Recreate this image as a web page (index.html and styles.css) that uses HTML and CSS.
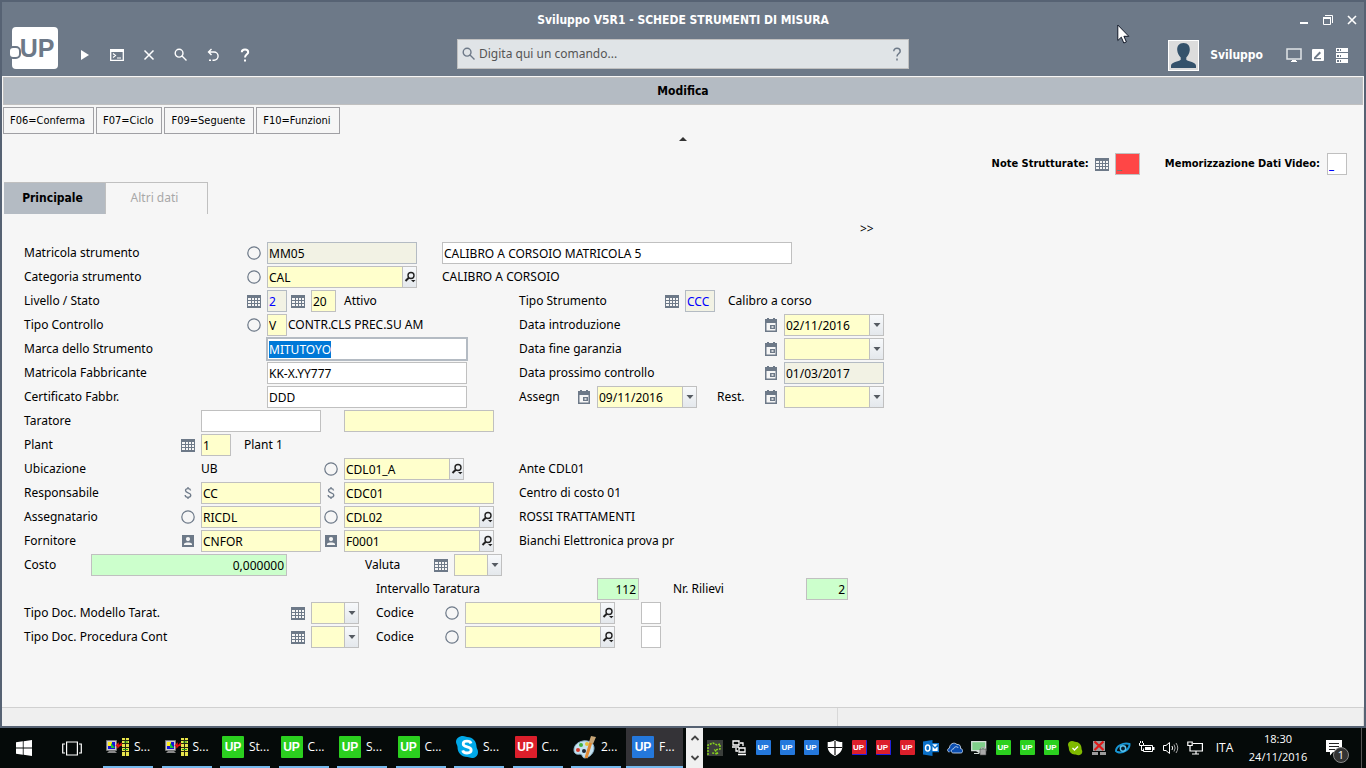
FILE: index.html
```html
<!DOCTYPE html>
<html lang="it">
<head>
<meta charset="utf-8">
<title>Sviluppo V5R1 - SCHEDE STRUMENTI DI MISURA</title>
<link rel="stylesheet" href="styles.css">
</head>
<body>
<svg class="defs" aria-hidden="true">
  <symbol id="i-grid" viewBox="0 0 14 14"><rect width="14" height="13" y="1" fill="#6d7988"/><path fill="#f6f6f6" d="M1 4h3v2H1zM5 4h2v2H5zM8 4h2v2H8zM11 4h2v2h-2zM1 7h3v2H1zM5 7h2v2H5zM8 7h2v2H8zM11 7h2v2h-2zM1 10h3v2H1zM5 10h2v2H5zM8 10h2v2H8zM11 10h2v2h-2z"/></symbol>
  <symbol id="i-ring" viewBox="0 0 14 14"><circle cx="7" cy="7" r="6.2" fill="none" stroke="#6d7988" stroke-width="1.2"/></symbol>
  <symbol id="i-cal" viewBox="0 0 14 14"><path fill="#6d7988" fill-rule="evenodd" d="M3 0h2v1h4V0h2v1h2v13H1V1h2zM2.500 5v7.500h9V5zM6 7h5v4H6zm1.500 1.300v1.500h2V8.300z"/></symbol>
  <symbol id="i-person" viewBox="0 0 14 14"><path fill="#6d7988" fill-rule="evenodd" d="M1 1h12v12H1zM7 3a2 2 0 1 0 0 4.200A2 2 0 0 0 7 3zM3 11h8V9.800C9.500 8 4.500 8 3 9.800z"/></symbol>
  <symbol id="i-dollar" viewBox="0 0 14 14"><path fill="none" stroke="#6d7988" stroke-width="1.300" d="M9.600 4.500C9.400 3.200 8.400 2.600 7 2.600S4.500 3.300 4.500 4.600C4.500 7.500 9.800 6 9.800 9c0 1.500-1.200 2.300-2.800 2.300S4.200 10.500 4.100 9M7 1v1.600M7 11.300V13"/></symbol>
  <symbol id="i-look" viewBox="0 0 12 14"><circle cx="7" cy="5.500" r="3" fill="none" stroke="#222" stroke-width="1.400"/><path fill="none" stroke="#222" stroke-width="2" d="M4.800 7.800 1.500 11"/><path fill="#222" d="M7 10h4.500L9.300 12.200z"/></symbol>
  <symbol id="i-down" viewBox="0 0 8 4"><path fill="#555b62" d="M.5 0h7L4 4z"/></symbol>
  <symbol id="i-search" viewBox="0 0 14 14"><path fill="none" stroke="currentColor" stroke-width="1.400" d="M9 5.200a3.900 3.900 0 1 1-7.800 0 3.900 3.900 0 0 1 7.800 0M8 8l4.500 4.500"/></symbol>
  <symbol id="i-help" viewBox="0 0 14 14"><path fill="none" stroke="currentColor" stroke-width="2" d="M3.800 4.200C3.800 2.500 5.200 1.500 7 1.500s3.200 1 3.200 2.700C10.200 6.200 7 6.500 7 9.500M7 11.500v2"/></symbol>
  <symbol id="i-pc" viewBox="0 0 24 20"><path fill="#ccc" stroke="#777" d="M1.500 3.500h10v10h-10z"/><path fill="#1313d8" d="M3 5h7v7H3z"/><path fill="#ffee20" d="M3 5h4v4H3z"/><path fill="#17c437" d="m6 6 4 5H6z"/><path fill="#888" d="M4 14h6l2 2H2z"/><path stroke="#e01010" stroke-width="1.500" fill="none" d="m11 9 2-2v3l3-3v2"/><path fill="#e8e54b" d="M17 1h7v18h-7z"/><path stroke="#27270e" d="M17 3.500h7M17 6.500h7M17 10.500h7M17 14.500h7M20.500 1v18"/><path stroke="#179b21" d="M19 5h4M18 12.500h5"/></symbol>
</svg>

<div class="window">
  <header class="header">
    <div class="left">
      <button class="logo" aria-label="Menu UP"><span>UP</span></button>
      <nav class="tools">
        <button aria-label="Esegui"><svg width="14" height="14" viewBox="0 0 14 14"><path fill="#fff" d="m3 2 8 5-8 5z"/></svg></button>
        <button aria-label="Console"><svg width="14" height="14" viewBox="0 0 14 14"><path fill="none" stroke="#fff" stroke-width="1.300" d="M.7 1.700h12.600v10.600H.7z"/><path fill="#fff" d="M0 1h14v3H0z"/><path fill="none" stroke="#fff" stroke-width="1.200" d="m3 5.500 2.500 2L3 9.500M7 10h4"/></svg></button>
        <button aria-label="Annulla"><svg width="14" height="14" viewBox="0 0 14 14"><path stroke="#fff" stroke-width="1.500" d="m2.500 2.500 9 9m0-9-9 9"/></svg></button>
        <button aria-label="Cerca"><svg width="14" height="14"><use href="#i-search"/></svg></button>
        <button aria-label="Indietro"><svg width="14" height="14" viewBox="0 0 14 14"><path fill="none" stroke="#fff" stroke-width="1.400" d="M5.500 1 2.500 4l3 3M2.500 4H8a4 4 0 0 1 0 8.200H6.500"/><path fill="#fff" d="M3 11.500h2v1.500H3z"/></svg></button>
        <button aria-label="Aiuto"><svg width="14" height="14"><use href="#i-help"/></svg></button>
      </nav>
    </div>
    <h1 class="title">Sviluppo V5R1 - SCHEDE STRUMENTI DI MISURA</h1>
    <div class="controls">
      <button aria-label="Riduci"><svg width="12" height="12" viewBox="0 0 12 12"><path fill="#fff" d="M2 8h8v2H2z"/></svg></button>
      <button aria-label="Ripristina"><svg width="12" height="12" viewBox="0 0 12 12"><path fill="none" stroke="#fff" d="M3 1.500h7.500V9M1.500 4v6.500h7V4"/><path stroke="#fff" stroke-width="2" d="M1 4h8"/></svg></button>
      <button aria-label="Chiudi"><svg width="12" height="12" viewBox="0 0 12 12"><path stroke="#fff" stroke-width="1.600" d="m2 2 8 8m0-8-8 8"/></svg></button>
    </div>
    <form class="search">
      <svg width="14" height="14"><use href="#i-search"/></svg>
      <input type="text" aria-label="Comando" placeholder="Digita qui un comando...">
      <button type="button" aria-label="Aiuto comandi"><svg width="14" height="14" viewBox="0 0 14 14"><path fill="none" stroke="currentColor" stroke-width="1.500" d="M3.800 4.200C3.800 2.300 5.200 1.300 7 1.300s3.200 1 3.200 2.900C10.200 6.500 7 6.500 7 9.500M7 11.500v2"/></svg></button>
    </form>
    <div class="user">
      <svg class="avatar" width="31" height="31" viewBox="0 0 31 31"><path fill="#fff" d="M0 0h31v31H0z"/><path fill="#dcdcdc" d="M1 1h29v29H1z"/><path fill="#34526b" d="M15.500 3c4.500 0 6.500 3 6.300 7-.2 3-1.800 6-3.500 7.500v2.200c2 2 9.700 2.300 9.700 6V28H3v-2.300c0-3.700 7.700-4 9.700-6v-2.200C11 16 9.400 13 9.200 10 9 6 11 3 15.500 3z"/></svg>
      <span class="user-name">Sviluppo</span>
      <div class="user-tools">
        <button aria-label="Schermo"><svg width="16" height="16" viewBox="0 0 16 16"><path fill="none" stroke="#dfe3e6" stroke-width="1.500" d="M1 2h14v10H1z"/><path fill="#fff" d="M6 13h4v1H6zM5 14h6v1H5z"/></svg></button>
        <button aria-label="Modifica note"><svg width="12" height="12" viewBox="0 0 12 12"><rect width="12" height="12" rx="1" fill="#fff"/><path fill="#6d7988" d="M2 8.500 7.500 2.500 9 4 4 9h5v1.200H2z"/></svg></button>
        <button aria-label="Server"><svg width="12" height="15" viewBox="0 0 12 15"><path fill="#fff" d="M0 0h12v4H0zM0 5h12v5H0zM0 11h12v4H0z"/><path fill="#6d7988" d="M1 1h2v2H1zM4 1h1v2H4zM1 7h2v2H1zM4 7h1v2H4zM1 12h2v2H1zM4 12h1v2H4z"/></svg></button>
      </div>
    </div>
  </header>

  <main class="main">
    <h2 class="mode">Modifica</h2>
    <div class="commands">
      <button>F06=Conferma</button><button>F07=Ciclo</button><button>F09=Seguente</button><button>F10=Funzioni</button>
    </div>
    <button class="collapse" aria-label="Comprimi"><svg width="8" height="4" viewBox="0 0 8 4"><path fill="#333" d="M4 0 8 4H0z"/></svg></button>
    <div class="options">
      <label for="note">Note Strutturate:</label>
      <button class="ico" aria-label="Elenco note"><svg><use href="#i-grid"/></svg></button>
      <input id="note" class="alert w25" value="_">
      <label class="memo-label" for="memo">Memorizzazione Dati Video:</label>
      <input id="memo" class="code w20" value="_">
    </div>
    <div class="tabs" role="tablist">
      <button role="tab" aria-selected="true">Principale</button><button role="tab" aria-selected="false">Altri dati</button>
    </div>

    <form class="form">
      <div class="row"><a class="x-more" href="#">&gt;&gt;</a></div>
      <div class="row">
        <label class="x-label" for="matr">Matricola strumento</label>
        <button type="button" class="ico x-ico3"><svg><use href="#i-ring"/></svg></button>
        <input id="matr" class="x-f3 w150 ro" value="MM05" readonly>
        <input class="x-desc2 w350" aria-label="Descrizione" value="CALIBRO A CORSOIO MATRICOLA 5">
      </div>
      <div class="row">
        <label class="x-label" for="cat">Categoria strumento</label>
        <button type="button" class="ico x-ico3"><svg><use href="#i-ring"/></svg></button>
        <span class="combo x-f3 w150"><input id="cat" value="CAL"><button type="button" aria-label="Cerca"><svg class="look"><use href="#i-look"/></svg></button></span>
        <span class="x-desc2">CALIBRO A CORSOIO</span>
      </div>
      <div class="row">
        <label class="x-label" for="liv">Livello / Stato</label>
        <button type="button" class="ico x-ico3"><svg><use href="#i-grid"/></svg></button>
        <input id="liv" class="x-f3 w20 ro code" value="2" readonly>
        <button type="button" class="ico x-ico4"><svg><use href="#i-grid"/></svg></button>
        <input class="x-f4 w25 y" aria-label="Stato" value="20">
        <span class="x-f5">Attivo</span>
        <label class="x-right" for="tipo">Tipo Strumento</label>
        <button type="button" class="ico x-ico8"><svg><use href="#i-grid"/></svg></button>
        <input id="tipo" class="x-f8 w30 ro code" value="CCC" readonly>
        <span class="x-desc8">Calibro a corso</span>
      </div>
      <div class="row">
        <label class="x-label" for="ctrl">Tipo Controllo</label>
        <button type="button" class="ico x-ico3"><svg><use href="#i-ring"/></svg></button>
        <input id="ctrl" class="x-f3 w20 y" value="V">
        <span class="x-desc3">CONTR.CLS PREC.SU AM</span>
        <label class="x-right" for="dintro">Data introduzione</label>
        <button type="button" class="ico x-ico9"><svg><use href="#i-cal"/></svg></button>
        <span class="combo x-f9 w100"><input id="dintro" value="02/11/2016"><button type="button" aria-label="Apri"><svg class="down"><use href="#i-down"/></svg></button></span>
      </div>
      <div class="row">
        <label class="x-label" for="marca">Marca dello Strumento</label>
        <input id="marca" class="x-f3 w200 active" value="MITUTOYO">
        <label class="x-right" for="dgar">Data fine garanzia</label>
        <button type="button" class="ico x-ico9"><svg><use href="#i-cal"/></svg></button>
        <span class="combo x-f9 w100"><input id="dgar"><button type="button" aria-label="Apri"><svg class="down"><use href="#i-down"/></svg></button></span>
      </div>
      <div class="row">
        <label class="x-label" for="fabb">Matricola Fabbricante</label>
        <input id="fabb" class="x-f3 w200" value="KK-X.YY777">
        <label class="x-right" for="dpross">Data prossimo controllo</label>
        <button type="button" class="ico x-ico9"><svg><use href="#i-cal"/></svg></button>
        <input id="dpross" class="x-f9 w100 ro" value="01/03/2017" readonly>
      </div>
      <div class="row">
        <label class="x-label" for="cert">Certificato Fabbr.</label>
        <input id="cert" class="x-f3 w200" value="DDD">
        <label class="x-right" for="dass">Assegn</label>
        <button type="button" class="ico x-ico7"><svg><use href="#i-cal"/></svg></button>
        <span class="combo x-f7 w100"><input id="dass" value="09/11/2016"><button type="button" aria-label="Apri"><svg class="down"><use href="#i-down"/></svg></button></span>
        <label class="x-rest" for="drest">Rest.</label>
        <button type="button" class="ico x-ico9"><svg><use href="#i-cal"/></svg></button>
        <span class="combo x-f9 w100"><input id="drest"><button type="button" aria-label="Apri"><svg class="down"><use href="#i-down"/></svg></button></span>
      </div>
      <div class="row">
        <label class="x-label" for="tar">Taratore</label>
        <input id="tar" class="x-f2 w120">
        <input class="x-f5 w150 y" aria-label="Codice taratore">
      </div>
      <div class="row">
        <label class="x-label" for="plant">Plant</label>
        <button type="button" class="ico x-ico2"><svg><use href="#i-grid"/></svg></button>
        <input id="plant" class="x-f2 w30 y" value="1">
        <span class="x-plant">Plant 1</span>
      </div>
      <div class="row">
        <label class="x-label" for="ubi">Ubicazione</label>
        <span class="x-f2">UB</span>
        <button type="button" class="ico x-ico5"><svg><use href="#i-ring"/></svg></button>
        <span class="combo x-f5 w120"><input id="ubi" value="CDL01_A"><button type="button" aria-label="Cerca"><svg class="look"><use href="#i-look"/></svg></button></span>
        <span class="x-right">Ante CDL01</span>
      </div>
      <div class="row">
        <label class="x-label" for="resp">Responsabile</label>
        <button type="button" class="ico x-ico2"><svg><use href="#i-dollar"/></svg></button>
        <input id="resp" class="x-f2 w120 y" value="CC">
        <button type="button" class="ico x-ico5"><svg><use href="#i-dollar"/></svg></button>
        <input class="x-f5 w150 y" aria-label="Codice responsabile" value="CDC01">
        <span class="x-right">Centro di costo 01</span>
      </div>
      <div class="row">
        <label class="x-label" for="asse">Assegnatario</label>
        <button type="button" class="ico x-ico2"><svg><use href="#i-ring"/></svg></button>
        <input id="asse" class="x-f2 w120 y" value="RICDL">
        <button type="button" class="ico x-ico5"><svg><use href="#i-ring"/></svg></button>
        <span class="combo x-f5 w150"><input aria-label="Codice assegnatario" value="CDL02"><button type="button" aria-label="Cerca"><svg class="look"><use href="#i-look"/></svg></button></span>
        <span class="x-right">ROSSI TRATTAMENTI</span>
      </div>
      <div class="row">
        <label class="x-label" for="forn">Fornitore</label>
        <button type="button" class="ico x-ico2"><svg><use href="#i-person"/></svg></button>
        <input id="forn" class="x-f2 w120 y" value="CNFOR">
        <button type="button" class="ico x-ico5"><svg><use href="#i-person"/></svg></button>
        <span class="combo x-f5 w150"><input aria-label="Codice fornitore" value="F0001"><button type="button" aria-label="Cerca"><svg class="look"><use href="#i-look"/></svg></button></span>
        <span class="x-right">Bianchi Elettronica prova pr</span>
      </div>
      <div class="row">
        <label class="x-label" for="costo">Costo</label>
        <input id="costo" class="x-cost w196 num" value="0,000000">
        <label class="x-valuta" for="val">Valuta</label>
        <button type="button" class="ico x-icov"><svg><use href="#i-grid"/></svg></button>
        <span class="combo x-fv w48"><select id="val"><option></option></select><span class="arrow"><svg class="down"><use href="#i-down"/></svg></span></span>
      </div>
      <div class="row">
        <label class="x-mid" for="inter">Intervallo Taratura</label>
        <input id="inter" class="x-f7 w42 num" value="112">
        <label class="x-nr" for="ril">Nr. Rilievi</label>
        <input id="ril" class="x-ril w42 num" value="2">
      </div>
      <div class="row">
        <label class="x-label" for="doc1">Tipo Doc. Modello Tarat.</label>
        <button type="button" class="ico x-ico4"><svg><use href="#i-grid"/></svg></button>
        <span class="combo x-f4 w48"><select id="doc1"><option></option></select><span class="arrow"><svg class="down"><use href="#i-down"/></svg></span></span>
        <label class="x-mid" for="cod1">Codice</label>
        <button type="button" class="ico x-ico6"><svg><use href="#i-ring"/></svg></button>
        <span class="combo x-f6 w150"><input id="cod1"><button type="button" aria-label="Cerca"><svg class="look"><use href="#i-look"/></svg></button></span>
        <input class="x-flag w20" aria-label="Opzione modello">
      </div>
      <div class="row">
        <label class="x-label" for="doc2">Tipo Doc. Procedura Cont</label>
        <button type="button" class="ico x-ico4"><svg><use href="#i-grid"/></svg></button>
        <span class="combo x-f4 w48"><select id="doc2"><option></option></select><span class="arrow"><svg class="down"><use href="#i-down"/></svg></span></span>
        <label class="x-mid" for="cod2">Codice</label>
        <button type="button" class="ico x-ico6"><svg><use href="#i-ring"/></svg></button>
        <span class="combo x-f6 w150"><input id="cod2"><button type="button" aria-label="Cerca"><svg class="look"><use href="#i-look"/></svg></button></span>
        <input class="x-flag w20" aria-label="Opzione procedura">
      </div>
    </form>
  </main>
  <footer class="status"><span></span><span></span></footer>
</div>

<footer class="taskbar">
  <button class="start" aria-label="Start"><svg width="16" height="16" viewBox="0 0 16 16"><path fill="#fff" d="M0 2.300 6.800 1.300V7.500H0zM7.600 1.200 16 0v7.500H7.600zM0 8.400h6.800v6.300L0 13.700zM7.600 8.400H16V16l-8.400-1.200z"/></svg></button>
  <button class="taskview" aria-label="Visualizzazione attività"><svg width="20" height="15" viewBox="0 0 20 15"><path fill="none" stroke="#fff" stroke-width="1.200" d="M4.600 1h10.800v13H4.600zM3 3H.7v9H3M17 3h2.300v9H17"/></svg></button>
  <div class="tasks">
    <button><svg width="24" height="20"><use href="#i-pc"/></svg>S...</button>
    <button><svg width="24" height="20"><use href="#i-pc"/></svg>S...</button>
    <button><b class="up green">UP</b>St...</button>
    <button><b class="up green">UP</b>C...</button>
    <button><b class="up green">UP</b>S...</button>
    <button><b class="up green">UP</b>C...</button>
    <button><svg width="22" height="22" viewBox="0 0 22 22"><path fill="#00a8e8" d="M7 0c2 0 3 .8 4 1 6 0 9.500 4.500 9.500 9.500 0 2 1.500 3 1.500 5.500 0 4-3 6-6 6-2 0-3-.8-4.500-1C5 21 1.500 16.500 1.500 11 1.500 9 0 8 0 6c0-3.500 3-6 7-6z"/><path fill="none" stroke="#fff" stroke-width="2.800" d="M15 7.500C14.500 5.800 13 5.200 11 5.200c-2.300 0-3.800 1-3.800 2.800 0 4 8 1.800 8 6 0 2-1.800 3-4.200 3-2.200 0-3.800-.8-4.300-2.700"/></svg>S...</button>
    <button><b class="up red">UP</b>C...</button>
    <button><svg width="23" height="23" viewBox="0 0 23 23"><path fill="#c5e2f0" stroke="#8db4ca" d="M10 5c6-1 11 2 11 7s-4 9-9 10c-3 .5-2-4-5-4-4 1-6-1-6-4 0-5 4-8 9-9z"/><circle cx="5" cy="14" r="2" fill="#d63a2c"/><circle cx="8" cy="9" r="2" fill="#42b23c"/><circle cx="14" cy="8" r="2" fill="#e6c23a"/><circle cx="11" cy="15" r="2" fill="#1b2635"/><path stroke="#e08a34" stroke-width="3" d="m13 22 5-16"/><path fill="#c7a576" d="m16 6 2-6 5 1-3 7z"/></svg>2...</button>
  </div>
  <button class="current"><b class="up blue">UP</b>F...</button>
  <div class="scroller">
    <button aria-label="Su"><svg width="10" height="6" viewBox="0 0 10 6"><path fill="none" stroke="#444" stroke-width="1.800" d="m1.500 5 3.500-3.500L8.500 5"/></svg></button>
    <button aria-label="Giù"><svg width="10" height="6" viewBox="0 0 10 6"><path fill="none" stroke="#444" stroke-width="1.800" d="m1.500 1 3.500 3.500L8.500 1"/></svg></button>
  </div>
  <div class="tray">
    <span><svg width="16" height="16" viewBox="0 0 16 16"><path fill="#3b3f3b" d="M0 0h16v16H0z"/><path fill="none" stroke="#86d11e" stroke-width="1.500" stroke-dasharray="2 1" d="M1 15V5l5-2 4 2 3-1v5l-5 1 3 4-6-1"/></svg></span>
    <span><svg width="16" height="16" viewBox="0 0 16 16"><path fill="none" stroke="#fff" stroke-width="1.300" d="M2 1h6v4H2zM8 8h6v4H8zM1 7h7M7 14.500h8M9 3h3v3M5 8v3h2"/></svg></span>
    <span><b class="up blue">UP</b></span>
    <span><b class="up blue">UP</b></span>
    <span><b class="up blue">UP</b></span>
    <span><svg width="16" height="16" viewBox="0 0 16 16"><path fill="#fff" d="M8 0c2 1.500 4.500 2 7.300 2v5c0 4.500-3.500 7-7.300 9-3.800-2-7.300-4.500-7.300-9V2C3.500 2 6 1.500 8 0z"/><path stroke="#111" stroke-width="1.200" d="M8 1v14M1 7.500h14"/></svg></span>
    <span><b class="up red edge">UP</b></span>
    <span><b class="up red edge">UP</b></span>
    <span><b class="up red">UP</b></span>
    <span><svg width="16" height="16" viewBox="0 0 16 16"><path fill="#fff" d="M8 3h8v9H8z"/><path fill="none" stroke="#0a70c8" stroke-width="1.300" d="M8 3.700h7.300v8H8M9 5l3 3 3.500-3.500"/><path fill="#0a70c8" d="M0 1.500 9.500 0v16L0 14.500z"/><ellipse cx="4.700" cy="8" rx="2.200" ry="3" fill="none" stroke="#fff" stroke-width="1.500"/></svg></span>
    <span><svg width="16" height="16" viewBox="0 0 16 16"><path fill="#0b4eb0" stroke="#dce8f8" stroke-width=".8" d="M2.500 12C0 12 0 8.500 2.500 8 2.500 4 7 1.500 10 4.500c2.500-.5 4 1.500 3.500 4 3 .5 3 4.500 0 4.500H6.500c-3 0-3-4 0-4C7 6.500 10 6 11.500 8"/></svg></span>
    <span><svg width="16" height="16" viewBox="0 0 16 16"><path fill="#7fcf8a" stroke="#d5ddd8" stroke-width="1.300" d="M.7 1.700h14v9H.7z"/><path fill="#d5ddd8" d="M5 11h4v2H3v1h6z"/><path fill="#aaa" stroke="#444" stroke-width=".6" d="M9 9h6v6H9z"/><path fill="none" stroke="#aaa" d="M10.500 9V7.500h3V9"/></svg></span>
    <span><b class="up green">UP</b></span>
    <span><b class="up green">UP</b></span>
    <span><b class="up green">UP</b></span>
    <span><svg width="16" height="16" viewBox="0 0 16 16"><path fill="#7fba00" d="M5 1c1 0 2 .5 3 .7 4 0 6.500 3 6.500 6.500 0 1.500.8 2 .8 3.500 0 2-2 3.500-4 3.500-1.500 0-2.500-.6-3.500-.6-3.600 0-6-3-6-6.500C1.800 6.500 1 6 1 4.500 1 2.500 3 1 5 1z"/><path fill="none" stroke="#fff" stroke-width="1.300" d="m5.500 8 2 2 3.500-3.500"/></svg></span>
    <span><svg width="14" height="16" viewBox="0 0 14 16"><path fill="#9b9b9b" d="M1 1h12v10H1zM0 12h6v3H0zM8 12h6v3H8z"/><path stroke="#e01818" stroke-width="2.200" d="m2.500 1.500 9 8.500m0-8.500-9 8.500"/></svg></span>
    <span><svg width="16" height="16" viewBox="0 0 16 16"><path fill="none" stroke="#1795d4" stroke-width="2" d="M1 11C1 6 8 2.500 14.500 4 15 9 8 14 2.500 12z"/><circle cx="8" cy="8.500" r="2.700" fill="#071c2c" stroke="#59c4f0" stroke-width="1.500"/></svg></span>
    <span><svg width="16" height="16" viewBox="0 0 16 16"><path fill="none" stroke="#fff" d="M4.500 5.500h9v6h-9v-3M.5 3v2.500h4V3M1.500 3V1M3.500 3V1M2.500 6v4.500H4"/><path fill="#fff" d="M6 7h6v3H6zM14 7h1.500v3H14z"/></svg></span>
    <span><svg width="16" height="16" viewBox="0 0 16 16"><path fill="none" stroke="#fff" d="M.5 5.500H3l3.500-3v11l-3.500-3H.5zM9 6q1.200 2 0 4"/><path fill="none" stroke="#aaa" d="M11 4.500q2.300 3.500 0 7M13 3q3.500 5 0 10"/></svg></span>
    <span><svg width="16" height="16" viewBox="0 0 16 16"><path fill="none" stroke="#fff" stroke-width="1.200" d="M6 3.500h9.400v7.500H3V7M9 11v3M5 14h7M.8 2h4.400v3.500H.8zM3 5.500V8"/></svg></span>
  </div>
  <span class="lang">ITA</span>
  <time class="clock"><span>18:30</span><span>24/11/2016</span></time>
  <button class="notify" aria-label="Notifiche"><svg width="16" height="16" viewBox="0 0 16 16"><path fill="#fff" d="M0 0h16v12H7l-3 3.500V12H0z"/><path stroke="#222" d="M3 3.500h10M3 6.500h10M3 9.500h6"/></svg><span class="badge">1</span></button>
</footer>

<svg class="pointer" width="13" height="20" viewBox="0 0 13 20"><path fill="#fff" stroke="#111827" d="M.8 1v15.500l3.500-3.300L6.800 19l2.600-1.100-2.500-5.600h4.900z"/></svg>
<script>
  const marca = document.getElementById('marca');
  marca.focus();
  marca.select();
</script>
</body>
</html>
```
FILE: styles.css
```css
* { box-sizing: border-box; }
html, body { height: 100%; }
body {
  margin: 0;
  display: flex;
  flex-direction: column;
  overflow: hidden;
  font: 12px/16px Tahoma, "Noto Sans", sans-serif;
  color: #000;
}
button, input, select { font: inherit; color: inherit; }
button { margin: 0; padding: 0; border: 0; background: none; display: flex; align-items: center; justify-content: center; }
svg { display: block; flex: none; }
.defs { position: absolute; width: 0; height: 0; }
h1, h2 { margin: 0; font-size: 12px; }
.title, .mode, .user-name, .commands, .options, .tabs [aria-selected="true"] { font-family: Tahoma, "DejaVu Sans Condensed", sans-serif; }

/* window */
.window { flex: 1; min-height: 0; display: flex; flex-direction: column; border: 2px solid #566273; background: #f6f6f6; }

/* header */
.header {
  display: grid;
  grid-template-columns: 1fr 452px 1fr;
  grid-template-rows: 35px 39px;
  background: #6d7988;
  color: #fff;
}
.left { grid-column: 1; grid-row: 1 / 3; display: flex; align-items: flex-end; padding-left: 10px; }
.logo { width: 46px; height: 42px; margin-bottom: 7px; border-radius: 4px; background: #fff; color: #6d7988; font: bold 25px/42px "Liberation Sans", Arial, sans-serif; position: relative; }
.logo span { padding-left: 4px; }
.logo::before { content: ""; position: absolute; left: -4px; bottom: 10px; width: 9px; height: 9px; border-radius: 5px; border: 2px solid #6d7988; background: #fff; }
.title { grid-column: 2; grid-row: 1; align-self: center; text-align: center; white-space: nowrap; }
.controls { grid-column: 3; grid-row: 1; display: flex; justify-content: flex-end; align-items: center; }
.controls button { width: 24px; height: 24px; }
.tools { display: flex; margin: 0 0 9px 11px; }
.tools button { width: 32px; height: 24px; }
.search { grid-column: 2; grid-row: 2; display: flex; align-items: center; align-self: start; height: 30px; margin: 2px 0; padding: 0 4px; border: 1px solid #c0c0c0; background: #e0e4e7; color: #6d7988; gap: 3px; }
.search input { flex: 1; border: 0; padding: 0; background: none; outline: 0; color: #555; }
.search input::placeholder { color: #555; }
.user { grid-column: 3; grid-row: 2; display: flex; align-items: center; justify-content: flex-end; padding: 0 10px 3px 0; }
.avatar { margin-right: 11px; }
.user-name { font-weight: bold; margin-right: 19px; }
.user-tools { display: flex; }
.user-tools button { width: 24px; height: 24px; }

/* page body */
.main { flex: 1; min-height: 0; display: flex; flex-direction: column; }
.mode { margin: 1px 1px 2px; height: 28px; line-height: 27px; text-align: center; background: #b4bbc3; border: 1px solid #c0c0c0; }
.commands { display: flex; gap: 2px; padding-left: 1px; font-size: 11px; }
.commands button { height: 27px; padding: 0 8px 0 6px; border: 1px solid #a0a0a4; }
.collapse { align-self: center; height: 8px; width: 16px; margin-top: 1px; }
.options { display: flex; align-items: center; justify-content: flex-end; height: 22px; margin: 10px 17px 0 0; font-size: 11px; font-weight: bold; }
.options .ico { margin: 0 3px; }
.memo-label { margin: 0 7px 0 25px; }
.tabs { display: flex; margin: 7px 0 3px 2px; height: 32px; }
.tabs button { width: 102px; padding: 0 4px 2px 0; border: 1px solid #c0c0c0; border-bottom: 0; border-left: 0; color: #a8a8a8; }
.tabs [aria-selected="true"] { background: #b4bbc3; color: #000; font-weight: bold; }

/* field rows share one set of named columns */
.row {
  display: grid;
  align-items: center;
  height: 24px;
  white-space: nowrap;
  padding-left: 22px;
  grid-template-columns:
    [label] 67px [cost] 87px [ico2] 23px [f2] 43px [plant ico3] 23px [f3] 21px [desc3 ico4] 23px
    [f4] 10px [ico5] 23px [f5] 21px [valuta] 11px [mid] 55px [icov] 11px [desc2 ico6] 12px [fv] 11px
    [f6] 54px [right] 55px [ico7] 23px [f7] 44px [flag] 21px [ico8] 11px [nr] 12px [f8] 32px
    [rest] 11px [desc8] 33px [ico9] 23px [f9] 22px [ril] 54px [more] 1fr;
}
.row > * { justify-self: start; grid-row: 1; }
.x-label { grid-column-start: label; }
.x-cost { grid-column-start: cost; }
.x-ico2 { grid-column-start: ico2; }
.x-f2 { grid-column-start: f2; }
.x-plant { grid-column-start: plant; }
.x-ico3 { grid-column-start: ico3; }
.x-f3 { grid-column-start: f3; }
.x-desc3 { grid-column-start: desc3; }
.x-ico4 { grid-column-start: ico4; }
.x-f4 { grid-column-start: f4; }
.x-ico5 { grid-column-start: ico5; }
.x-f5 { grid-column-start: f5; }
.x-valuta { grid-column-start: valuta; }
.x-mid { grid-column-start: mid; }
.x-icov { grid-column-start: icov; }
.x-desc2 { grid-column-start: desc2; }
.x-ico6 { grid-column-start: ico6; }
.x-fv { grid-column-start: fv; }
.x-f6 { grid-column-start: f6; }
.x-right { grid-column-start: right; }
.x-ico7 { grid-column-start: ico7; }
.x-f7 { grid-column-start: f7; }
.x-flag { grid-column-start: flag; }
.x-ico8 { grid-column-start: ico8; }
.x-nr { grid-column-start: nr; }
.x-f8 { grid-column-start: f8; }
.x-rest { grid-column-start: rest; }
.x-desc8 { grid-column-start: desc8; }
.x-ico9 { grid-column-start: ico9; }
.x-f9 { grid-column-start: f9; }
.x-ril { grid-column-start: ril; }
.x-more { grid-column-start: more; color: #000; text-decoration: none; }

.ico { width: 20px; height: 20px; }
.ico svg { width: 14px; height: 14px; }
.main input, .combo { height: 22px; padding: 0 2px 0 1px; border: 1px solid #c0c0c0; border-radius: 0; background: #fff; }
.main input { outline: 0; min-width: 0; }
.combo { display: flex; padding: 0; background: #ffffcc; position: relative; }
.main .combo input, .combo select { flex: 1; height: 20px; width: 0; border: 0; padding-left: 1px; background: none; }
.combo select { appearance: none; outline: 0; }
.combo button, .arrow { width: 14px; border-left: 1px solid #c0c0c0; background: linear-gradient(#f7f9fb, #e4e8ec); display: flex; align-items: center; justify-content: center; }
.arrow { pointer-events: none; }
.look { width: 12px; height: 14px; }
.down { width: 8px; height: 4px; }
.main .y { background: #ffffcc; }
.main .ro { background: #f2f2e4; border-color: #b4bbc3; }
.main .code { color: #0000ff; }
.main .num { background: #ccffcc; text-align: right; }
.main .alert { background: #ff4646; color: #777; }
.main .active { outline: 1px solid #b4bbc3; border-color: #b4bbc3; }
.active::selection { background: #0078d7; color: #fff; }
.w20 { width: 20px; }
.w25 { width: 25px; }
.w30 { width: 30px; }
.w42 { width: 42px; }
.w48 { width: 48px; }
.w100 { width: 100px; }
.w120 { width: 120px; }
.w150 { width: 150px; }
.w196 { width: 196px; }
.w200 { width: 200px; }
.w350 { width: 350px; }

.status { display: grid; grid-template-columns: 836px 1fr; height: 19px; border-top: 1px solid #d0d0d0; background: #efefef; }
.status span { border-right: 1px solid #d8d8d8; }

/* taskbar */
.taskbar { display: flex; align-items: center; height: 40px; background: #050a09; color: #fff; font-family: "Open Sans", "Noto Sans", sans-serif; }
.taskbar > * { flex: none; }
.taskbar button { height: 40px; }
.start { width: 48px; }
.taskview { width: 48px; }
.tasks { display: flex; justify-content: space-between; width: 518px; margin: 0 5px 0 7px; }
.taskbar .tasks button, .taskbar .current { justify-content: flex-start; gap: 5px; padding-left: 2px; width: 50px; border-bottom: 2px solid #76b9ed; white-space: nowrap; }
.taskbar .current { width: 57px; padding-left: 6px; background: #343337; }
.up { flex: none; width: 22px; height: 22px; border-radius: 1px; text-align: center; font: bold 12px/22px "Liberation Sans", Arial, sans-serif; color: #fff; }
.green { background: #2bd01f; }
.red { background: #dc1f2b; }
.blue { background: #2478dc; }
.edge { border-right: 1px solid #2020e0; border-bottom: 1px solid #2020e0; }
.scroller { width: 17px; margin-left: 3px; background: #f0f0f0; }
.scroller button { width: 17px; height: 20px; }
.tray { display: flex; }
.tray span { width: 24px; display: flex; justify-content: center; }
.tray .up { width: 15px; height: 15px; font-size: 8px; line-height: 15px; }
.lang { width: 35px; text-align: center; }
.clock { width: 72px; display: flex; flex-direction: column; text-align: center; font-size: 11px; line-height: 18px; }
.notify { position: relative; width: 38px; margin-left: auto; margin-right: 4px; border-right: 1px solid #555; }
.taskbar .notify { width: 48px; padding-right: 8px; }
.badge { position: absolute; left: 19px; top: 19px; width: 16px; height: 16px; border: 1px solid #888; border-radius: 8px; background: #333; font-size: 11px; line-height: 14px; }

.pointer { position: absolute; left: 1117px; top: 24px; }
```
